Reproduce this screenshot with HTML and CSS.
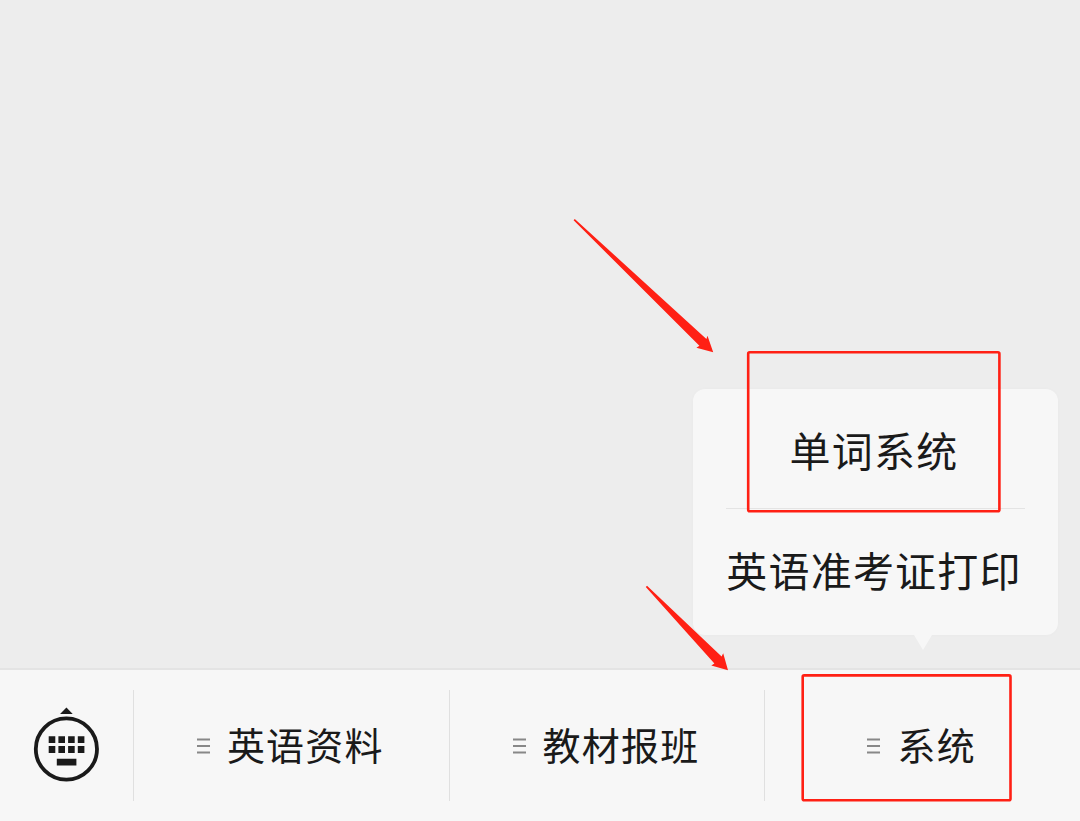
FILE: index.html
```html
<!DOCTYPE html>
<html lang="zh-CN">
<head>
    <meta charset="UTF-8">
    <meta name="viewport" content="width=device-width, initial-scale=1.0">
    <title>英语资料</title>
    <link rel="stylesheet" href="styles.css">
</head>
<body>

    <!-- Chat Area -->
    <main class="chat">
        <div class="submenu">
            <a class="submenu-item">单词系统</a>
            <a class="submenu-item">英语准考证打印</a>
        </div>
    </main>

    <!-- Bottom Menu Bar -->
    <nav class="menu-bar">
        <button class="keyboard-toggle" type="button" aria-label="键盘">
            <svg width="66" height="76" viewBox="0 0 66 76">
                <path d="M33.4 -0.5L39.7 6H27.1Z" fill="#1a1a1a"/>
                <circle cx="33.4" cy="41" r="30.6" fill="none" stroke="#1a1a1a" stroke-width="3.8"/>
                <path d="M15.7 28.3h6.6v6.8h-6.6zM25.4 28.3h6.6v6.8h-6.6zM35.1 28.3h6.6v6.8h-6.6zM44.8 28.3h6.6v6.8h-6.6zM15.7 38.1h6.6v6.8h-6.6zM25.4 38.1h6.6v6.8h-6.6zM35.1 38.1h6.6v6.8h-6.6zM44.8 38.1h6.6v6.8h-6.6zM23.8 50.8h19.6v6.8H23.8z" fill="#1a1a1a"/>
            </svg>
        </button>
        <div class="menu-item">
            <svg class="menu-icon" width="13" height="16" viewBox="0 0 13 16"><path d="M0 1.5h13M0 8h13M0 14.5h13"/></svg>
            <span>英语资料</span>
        </div>
        <div class="menu-item">
            <svg class="menu-icon" width="13" height="16" viewBox="0 0 13 16"><path d="M0 1.5h13M0 8h13M0 14.5h13"/></svg>
            <span>教材报班</span>
        </div>
        <div class="menu-item">
            <svg class="menu-icon" width="13" height="16" viewBox="0 0 13 16"><path d="M0 1.5h13M0 8h13M0 14.5h13"/></svg>
            <span>系统</span>
        </div>
    </nav>

    <!-- Red Marks -->
    <svg class="marks" width="1080" height="821" viewBox="0 0 1080 821">
        <rect x="748.2" y="352.2" width="251.2" height="159" rx="1.5"/>
        <rect x="802.7" y="675.4" width="207.8" height="124.8" rx="1.5"/>
        <path class="arrow" d="M574.8 219L706.4 338.9L707.5 335.8L713.2 352.3L696.4 347.7L699.4 345.8L573.6 220.2Z"/>
        <path class="arrow" d="M647 585.8L721.6 656.4L723.2 653.3L728 670.2L711.3 665.4L714.4 663.5L645.8 587Z"/>
    </svg>

</body>
</html>
```

FILE: styles.css
```css
/* Base Styling for the Body */
body {
    font-family: "Noto Sans CJK SC", "Noto Sans", sans-serif;
    background-color: #ededed;
    color: #1a1a1a;
    margin: 0;
    height: 821px;
    display: flex;
    flex-direction: column;
    overflow: hidden;
    position: relative;
}

/* Chat Area */
.chat {
    flex: 1;
    display: flex;
    align-items: flex-end;
    justify-content: flex-end;
    padding: 0 22.5px 33.5px 0;
}

/* Submenu Popup */
.submenu {
    position: relative;
    box-sizing: border-box;
    width: 365px;
    height: 246px;
    padding: 0 33px 7px;
    display: flex;
    flex-direction: column;
    background-color: #f7f7f7;
    border-radius: 12px;
    box-shadow: 0 0 4px rgba(0, 0, 0, 0.02);
}

.submenu::after {
    content: "";
    position: absolute;
    top: 100%;
    right: 126px;
    border: 9.5px solid transparent;
    border-top: 15px solid #f7f7f7;
    border-bottom: 0;
}

.submenu-item {
    flex: 1;
    display: flex;
    align-items: center;
    justify-content: center;
    padding: 3px 2px 0 0;
    font-size: 41px;
    letter-spacing: 1.2px;
    line-height: 1;
    white-space: nowrap;
}

.submenu-item + .submenu-item {
    border-top: 1px solid #e4e4e4;
}

/* Bottom Menu Bar */
.menu-bar {
    box-sizing: border-box;
    height: 153px;
    display: flex;
    align-items: center;
    background-color: #f7f7f7;
    border-top: 2px solid #e4e4e4;
}

.keyboard-toggle {
    width: 133px;
    padding: 0 1px 0 0;
    border: none;
    background: none;
    display: flex;
    justify-content: center;
}

.keyboard-toggle svg {
    overflow: visible;
}

.menu-item {
    flex: 1;
    box-sizing: border-box;
    height: 111px;
    display: flex;
    align-items: center;
    justify-content: center;
    gap: 17px;
    padding-right: 2px;
    border-left: 1px solid #e0e0e0;
    font-size: 38px;
    letter-spacing: 1.2px;
    line-height: 1;
}

.menu-item span {
    padding-bottom: 4px;
}

.menu-icon path {
    fill: none;
    stroke: #888;
    stroke-width: 1.8;
}

/* Red Marks */
.marks {
    position: absolute;
    top: 0;
    left: 0;
    pointer-events: none;
}

.marks rect {
    fill: none;
    stroke: #ff2014;
    stroke-width: 2.6;
}

.marks .arrow {
    fill: #ff2014;
}
```
